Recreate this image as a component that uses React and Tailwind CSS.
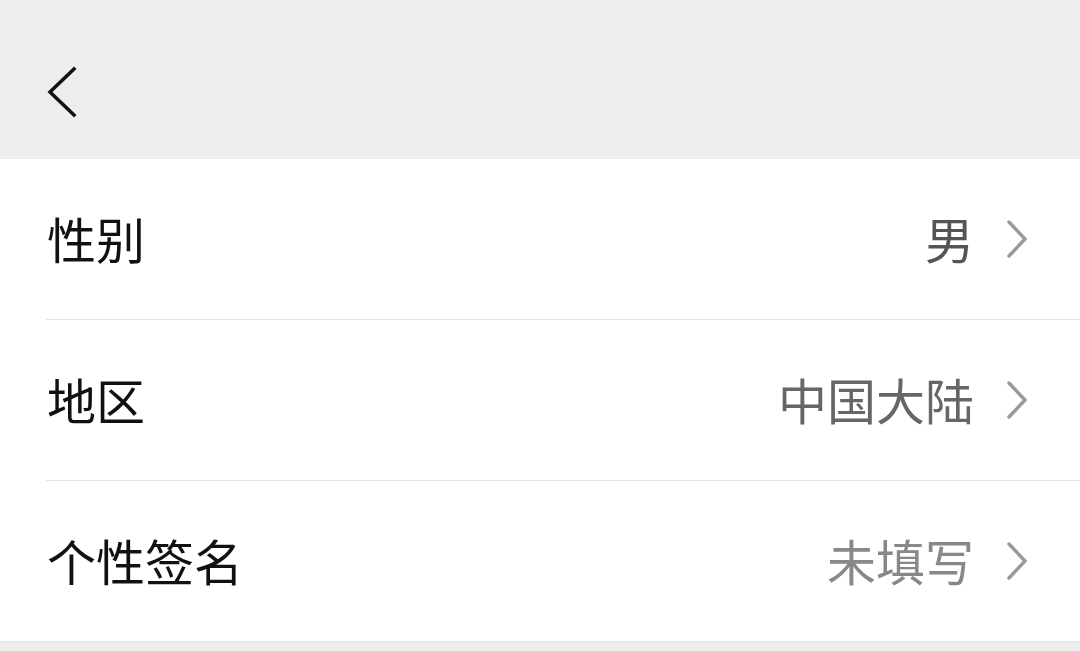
import React from "react";

function Chevron() {
  return (
    <svg width="26" height="40" viewBox="0 0 26 40" className="ml-[30px] mr-[50px]">
      <path d="M5 3 L21 20 L5 37" fill="none" stroke="#9a9a9a" strokeWidth="3.5" strokeLinecap="round" strokeLinejoin="round" />
    </svg>
  );
}

function Row({ label, value, valueColor, divider }) {
  return (
    <div className="flex flex-col">
      <div className="flex items-center h-[160px] pl-[47px]">
        <span className="flex-1 text-[49px] leading-none text-[#111] -mt-[4px]">{label}</span>
        <span className={`text-[49px] leading-none -mt-[4px] ${valueColor}`}>{value}</span>
        <Chevron />
      </div>
      {divider && <div className="h-px bg-[#e5e5e5] ml-[46px]" />}
    </div>
  );
}

export default function App() {
  return (
    <div
      className="w-[1080px] h-[651px] bg-[#ededed] flex flex-col overflow-hidden"
      style={{ fontFamily: '"Noto Sans CJK SC", "Noto Sans", sans-serif' }}
    >
      <div className="h-[159px] flex items-start pt-[66px] pl-[46px]">
        <svg width="34" height="52" viewBox="0 0 34 52">
          <path d="M28 3 L4 26 L28 49" fill="none" stroke="#111" strokeWidth="3.5" strokeLinecap="square" />
        </svg>
      </div>
      <div className="bg-white border-b border-[#e2e2e2]">
        <Row label="性别" value="男" valueColor="text-[#555]" divider />
        <Row label="地区" value="中国大陆" valueColor="text-[#666]" divider />
        <Row label="个性签名" value="未填写" valueColor="text-[#888]" />
      </div>
    </div>
  );
}
